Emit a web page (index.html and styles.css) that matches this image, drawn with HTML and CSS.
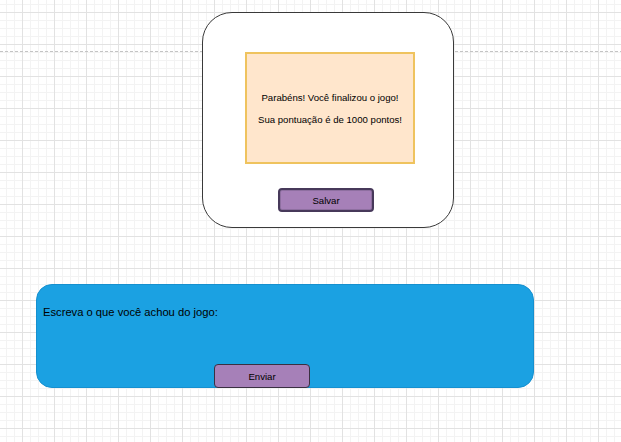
FILE: index.html
```html
<!DOCTYPE html>
<html lang="pt">
<head>
<meta charset="utf-8">
<title>Fim de jogo</title>
<link rel="stylesheet" href="styles.css">
</head>
<body>
<div class="canvas">
  <div class="page-break"></div>
  <div class="card">
    <div class="message">
      <p>Parabéns! Você finalizou o jogo!</p>
      <p>Sua pontuação é de 1000 pontos!</p>
    </div>
    <button class="btn btn-save">Salvar</button>
  </div>
  <div class="feedback">
    <p class="feedback-label">Escreva o que você achou do jogo:</p>
    <button class="btn btn-send">Enviar</button>
  </div>
</div>
</body>
</html>
```

FILE: styles.css
```css
html, body {
  margin: 0;
  padding: 0;
}

body {
  font-family: "Liberation Sans", Arial, sans-serif;
  color: #000;
}

.canvas {
  position: relative;
  width: 621px;
  height: 442px;
  box-sizing: border-box;
  padding-top: 12px;
  overflow: hidden;
  background-color: #fff;
  background-image:
    linear-gradient(to right, #e2e2e2 1px, transparent 1px),
    linear-gradient(to bottom, #e2e2e2 1px, transparent 1px),
    linear-gradient(to right, #f3f3f3 1px, transparent 1px),
    linear-gradient(to bottom, #f3f3f3 1px, transparent 1px);
  background-size: 32px 32px, 32px 32px, 8px 8px, 8px 8px;
  background-position: 22px 12px, 22px 12px, 6px 4px, 6px 4px;
}

.page-break {
  position: absolute;
  left: 0;
  right: 0;
  top: 51px;
  height: 1px;
  background-image: linear-gradient(to right, #c4c4c4 3px, transparent 3px);
  background-size: 5px 1px;
}

.card {
  position: relative;
  margin-left: 202px;
  width: 252px;
  height: 216px;
  box-sizing: border-box;
  border: 1px solid #3a3a3a;
  border-radius: 30px;
  background: #fff;
  padding-top: 39px;
  display: flex;
  flex-direction: column;
  align-items: flex-start;
}

.message {
  margin-left: 42px;
  width: 170px;
  height: 112px;
  box-sizing: border-box;
  border: 2px solid #efc35e;
  background: #ffe6cc;
  display: flex;
  flex-direction: column;
  justify-content: center;
  align-items: center;
  gap: 10px;
  font-size: 9.6px;
  padding-top: 1px;
}

.message p {
  margin: 0;
  line-height: 12px;
}

.btn {
  font-family: "Liberation Sans", Arial, sans-serif;
  font-size: 9.6px;
  color: #000;
  background: #a680b8;
  width: 96px;
  height: 24px;
  box-sizing: border-box;
  padding: 0;
  cursor: pointer;
}

.btn-save {
  margin-left: 75px;
  margin-top: 24px;
  border: 2px solid #47395a;
  border-radius: 4px;
  box-shadow: inset 0 0 0 1px #8e6fa0;
}

.feedback {
  margin-top: 56px;
  margin-left: 36px;
  width: 498px;
  height: 104px;
  box-sizing: border-box;
  border: 1px solid #1690cf;
  border-radius: 16px;
  background: #1ba1e2;
  padding: 21px 0 0 6px;
  display: flex;
  flex-direction: column;
  align-items: flex-start;
}

.feedback-label {
  margin: 0;
  font-size: 11.2px;
  line-height: 13px;
}

.btn-send {
  margin-top: auto;
  margin-bottom: -1px;
  margin-left: 171px;
  border: 1px solid #3a3042;
  border-radius: 4px;
}
```
